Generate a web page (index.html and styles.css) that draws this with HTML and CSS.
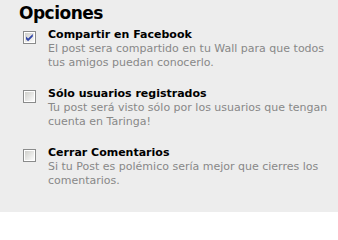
FILE: index.html
```html
<!DOCTYPE html>
<html lang="es">
<head>
<meta charset="utf-8">
<link rel="stylesheet" href="styles.css">
</head>
<body>
<div class="panel">
  <h2 class="title">Opciones</h2>
  <ul class="options">
    <li class="option">
      <svg class="check" width="13" height="13" viewBox="0 0 13 13">
        <defs>
          <linearGradient id="g1" x1="0" y1="0" x2="1" y2="1">
            <stop offset="0" stop-color="#cfcfcb"/>
            <stop offset="1" stop-color="#fbfbfb"/>
          </linearGradient>
        </defs>
        <rect x="0.5" y="0.5" width="12" height="12" fill="#ffffff" stroke="#8a8b8b"/>
        <rect x="2" y="2" width="9" height="9" fill="url(#g1)"/>
        <path d="M3 5.6 L5.1 7.6 L9.8 2.9 L9.8 5.6 L5.1 10.2 L3 8.2 Z" fill="#3347a8"/>
      </svg>
      <div class="text">
        <div class="label">Compartir en Facebook</div>
        <div class="desc">El post sera compartido en tu Wall para que todos tus amigos puedan conocerlo.</div>
      </div>
    </li>
    <li class="option">
      <svg class="check" width="13" height="13" viewBox="0 0 13 13">
        <defs>
          <linearGradient id="g2" x1="0" y1="0" x2="1" y2="1">
            <stop offset="0" stop-color="#cfcfcb"/>
            <stop offset="1" stop-color="#fbfbfb"/>
          </linearGradient>
        </defs>
        <rect x="0.5" y="0.5" width="12" height="12" fill="#ffffff" stroke="#8a8b8b"/>
        <rect x="2" y="2" width="9" height="9" fill="url(#g2)"/>
      </svg>
      <div class="text">
        <div class="label">Sólo usuarios registrados</div>
        <div class="desc">Tu post será visto sólo por los usuarios que tengan cuenta en Taringa!</div>
      </div>
    </li>
    <li class="option">
      <svg class="check" width="13" height="13" viewBox="0 0 13 13">
        <defs>
          <linearGradient id="g3" x1="0" y1="0" x2="1" y2="1">
            <stop offset="0" stop-color="#cfcfcb"/>
            <stop offset="1" stop-color="#fbfbfb"/>
          </linearGradient>
        </defs>
        <rect x="0.5" y="0.5" width="12" height="12" fill="#ffffff" stroke="#8a8b8b"/>
        <rect x="2" y="2" width="9" height="9" fill="url(#g3)"/>
      </svg>
      <div class="text">
        <div class="label">Cerrar Comentarios</div>
        <div class="desc">Si tu Post es polémico sería mejor que cierres los comentarios.</div>
      </div>
    </li>
  </ul>
</div>
</body>
</html>
```

FILE: styles.css
```css
html, body {
  margin: 0;
  padding: 0;
  background: #ffffff;
}

body {
  width: 338px;
  height: 216px;
  overflow: hidden;
  font-family: "DejaVu Sans", Verdana, sans-serif;
}

.panel {
  background: #ededed;
  height: 212px;
  box-sizing: border-box;
  padding: 3px 0 0 19px;
}

.title {
  margin: 0 0 4px 0;
  font-size: 17px;
  letter-spacing: -0.5px;
  line-height: 20px;
  font-weight: bold;
  color: #000000;
}

.options {
  list-style: none;
  margin: 0;
  padding: 0 0 0 4px;
  display: flex;
  flex-direction: column;
  gap: 16px;
}

.option {
  display: flex;
  align-items: flex-start;
  gap: 12px;
}

.check {
  flex: none;
  display: block;
  margin-top: 4px;
}

.text {
  width: 288px;
}

.label {
  font-size: 11px;
  line-height: 15px;
  font-weight: bold;
  color: #000000;
}

.desc {
  font-size: 11px;
  line-height: 14px;
  color: #888888;
}
```
